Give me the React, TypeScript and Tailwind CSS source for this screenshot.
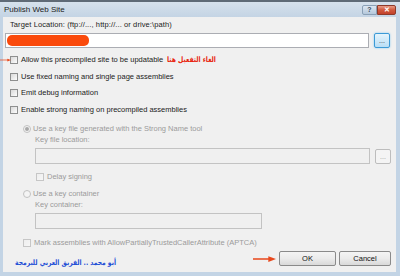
import type { ReactNode } from 'react'

// Win7 style "Publish Web Site" dialog — tiny scaled-down screenshot, so everything is ~7.5px text.

function CheckBox({ disabled = false }: { disabled?: boolean }) {
  return (
    <span
      className={
        'inline-block h-[8px] w-[8px] shrink-0 border bg-gradient-to-br ' +
        (disabled
          ? 'border-[#c6c6c6] from-[#eeeeee] to-[#f6f6f6]'
          : 'border-[#8e8f8f] from-[#d9d9d9] to-[#fdfdfd]')
      }
    />
  )
}

function Radio({ checked = false }: { checked?: boolean }) {
  return (
    <span className="flex h-[8px] w-[8px] shrink-0 items-center justify-center rounded-full border border-[#c2c2c2] bg-[#f4f4f4]">
      {checked && <span className="h-[4px] w-[4px] rounded-full bg-[#a8a8a8]" />}
    </span>
  )
}

function Row({ children, className = '' }: { children: ReactNode; className?: string }) {
  return <div className={'flex items-center ' + className}>{children}</div>
}

function BrowseButton({ active = false }: { active?: boolean }) {
  return (
    <div
      className={
        'ml-[5px] flex h-[15px] w-[16px] shrink-0 items-center justify-center rounded-[2px] border text-[7px] leading-none ' +
        (active
          ? 'border-[#3c9ad6] bg-gradient-to-b from-[#e5f4fc] to-[#b9def5] text-[#333] shadow-[0_0_2px_#7cc4f0]'
          : 'border-[#bdbdbd] bg-[#f4f4f4] text-[#9a9a9a]')
      }
    >
      ...
    </div>
  )
}

function Arrow({ className }: { className: string }) {
  return (
    <svg className={'absolute ' + className} viewBox="0 0 24 6" fill="none">
      <line x1="0" y1="3" x2="19" y2="3" stroke="#e8491d" strokeWidth="1.6" />
      <path d="M16 0 L24 3 L16 6 Z" fill="#e8491d" />
    </svg>
  )
}

function WinButton({ label }: { label: string }) {
  return (
    <div className="flex h-[15px] items-center justify-center rounded-[2px] border border-[#8a8a8a] bg-gradient-to-b from-[#f4f4f4] via-[#ebebeb] to-[#d9d9d9] text-[#111]">
      {label}
    </div>
  )
}

export default function App() {
  return (
    <div className="relative flex h-[276px] w-[400px] flex-col overflow-hidden bg-[#c3d4e5] font-['Liberation_Sans',Arial,sans-serif] text-[7.5px] leading-[10px] text-[#1b1b1b]">
      {/* title bar */}
      <div className="h-[2px] bg-[#5f6a76]" />
      <div className="flex h-[15px] items-center bg-gradient-to-b from-[#d6e1ec] to-[#c4d4e4] pl-[4px] pr-[4px]">
        <span className="text-[8px] text-[#1c1c1c]">Publish Web Site</span>
        <div className="ml-auto flex h-[10px] items-stretch">
          <div className="flex w-[15px] items-center justify-center rounded-l-[2px] border border-[#8aa0b6] bg-gradient-to-b from-[#dbe6f1] to-[#b5c8db] text-[7px] font-bold leading-none text-[#3a4a5a]">
            ?
          </div>
          <div className="flex w-[19px] items-center justify-center rounded-r-[2px] border border-[#8d3a2a] bg-gradient-to-b from-[#e99b86] via-[#d0583d] to-[#c2412a] text-[7px] font-bold leading-none text-white">
            ✕
          </div>
        </div>
      </div>

      {/* client area */}
      <div className="ml-[3px] mr-[4px] mb-[4px] flex flex-1 flex-col bg-[#f0f0f0]">
        <div className="ml-[7px] mt-[3px] h-[10px] tracking-[0.1px]">Target Location: (ftp://..., http://... or drive:\path)</div>
        <Row className="ml-[2px] mt-[3px]">
          <div className="flex h-[15px] w-[364px] items-center border border-[#abadb3] bg-white pl-[1px]">
            <div className="h-[11px] w-[82px] rounded-[5px] bg-[#fa4a0c]" />
          </div>
          <BrowseButton active />
        </Row>

        <div className="mt-[4px] flex flex-col">
          <Row className="h-[16.5px] pl-[7px]">
            <CheckBox />
            <span className="ml-[3px]">Allow this precompiled site to be updatable</span>
            <span
              className="ml-[4px] inline-block origin-left scale-x-[0.8] whitespace-nowrap font-['DejaVu_Sans',sans-serif] text-[7.6px] font-bold text-[#e8230c]"
              dir="rtl"
            >
              الغاء التفعيل هنا
            </span>
          </Row>
          <Row className="h-[16.5px] pl-[7px]">
            <CheckBox />
            <span className="ml-[3px]">Use fixed naming and single page assemblies</span>
          </Row>
          <Row className="h-[16.5px] pl-[7px]">
            <CheckBox />
            <span className="ml-[3px]">Emit debug information</span>
          </Row>
          <Row className="h-[16.5px] pl-[7px]">
            <CheckBox />
            <span className="ml-[3px]">Enable strong naming on precompiled assemblies</span>
          </Row>
        </div>

        {/* disabled strong-name section */}
        <div className="flex flex-col text-[#9b9b9b]">
          <Row className="mt-[5px] h-[12px] pl-[20px]">
            <Radio checked />
            <span className="ml-[2px]">Use a key file generated with the Strong Name tool</span>
          </Row>
          <div className="ml-[32px] h-[10px]">Key file location:</div>
          <Row className="ml-[32px] mt-[3px]">
            <div className="h-[16px] w-[335px] border border-[#c3c3c3] bg-[#f0f0f0]" />
            <BrowseButton />
          </Row>
          <Row className="mt-[7px] h-[12px] pl-[33px]">
            <CheckBox disabled />
            <span className="ml-[3px]">Delay signing</span>
          </Row>
          <Row className="mt-[4.5px] h-[12px] pl-[20px]">
            <Radio />
            <span className="ml-[2px]">Use a key container</span>
          </Row>
          <div className="ml-[32px] mt-[0.5px] h-[10px]">Key container:</div>
          <div className="ml-[32px] mt-[3px] h-[16px] w-[227px] border border-[#c3c3c3] bg-[#f0f0f0]" />
          <Row className="mt-[8px] h-[12px] pl-[20px]">
            <CheckBox disabled />
            <span className="ml-[3px]">Mark assemblies with AllowPartiallyTrustedCallerAttribute (APTCA)</span>
          </Row>
        </div>

        <Row className="mt-[2px] h-[15px]">
          <span
            className="ml-[12px] mt-[9px] inline-block origin-left scale-x-[0.8] whitespace-nowrap font-['DejaVu_Sans',sans-serif] text-[7.5px] font-bold text-[#1f4fd6]"
            dir="rtl"
          >
            أبو محمد .. الفريق العربي للبرمجة
          </span>
          <div className="ml-auto mr-[5px] flex gap-[3px]">
            <div className="w-[57px]">
              <WinButton label="OK" />
            </div>
            <div className="w-[52px]">
              <WinButton label="Cancel" />
            </div>
          </div>
        </Row>
      </div>

      {/* annotation arrows */}
      <Arrow className="left-[0px] top-[57px] h-[6px] w-[11px]" />
      <Arrow className="left-[253px] top-[256px] h-[6px] w-[23px]" />
    </div>
  )
}
